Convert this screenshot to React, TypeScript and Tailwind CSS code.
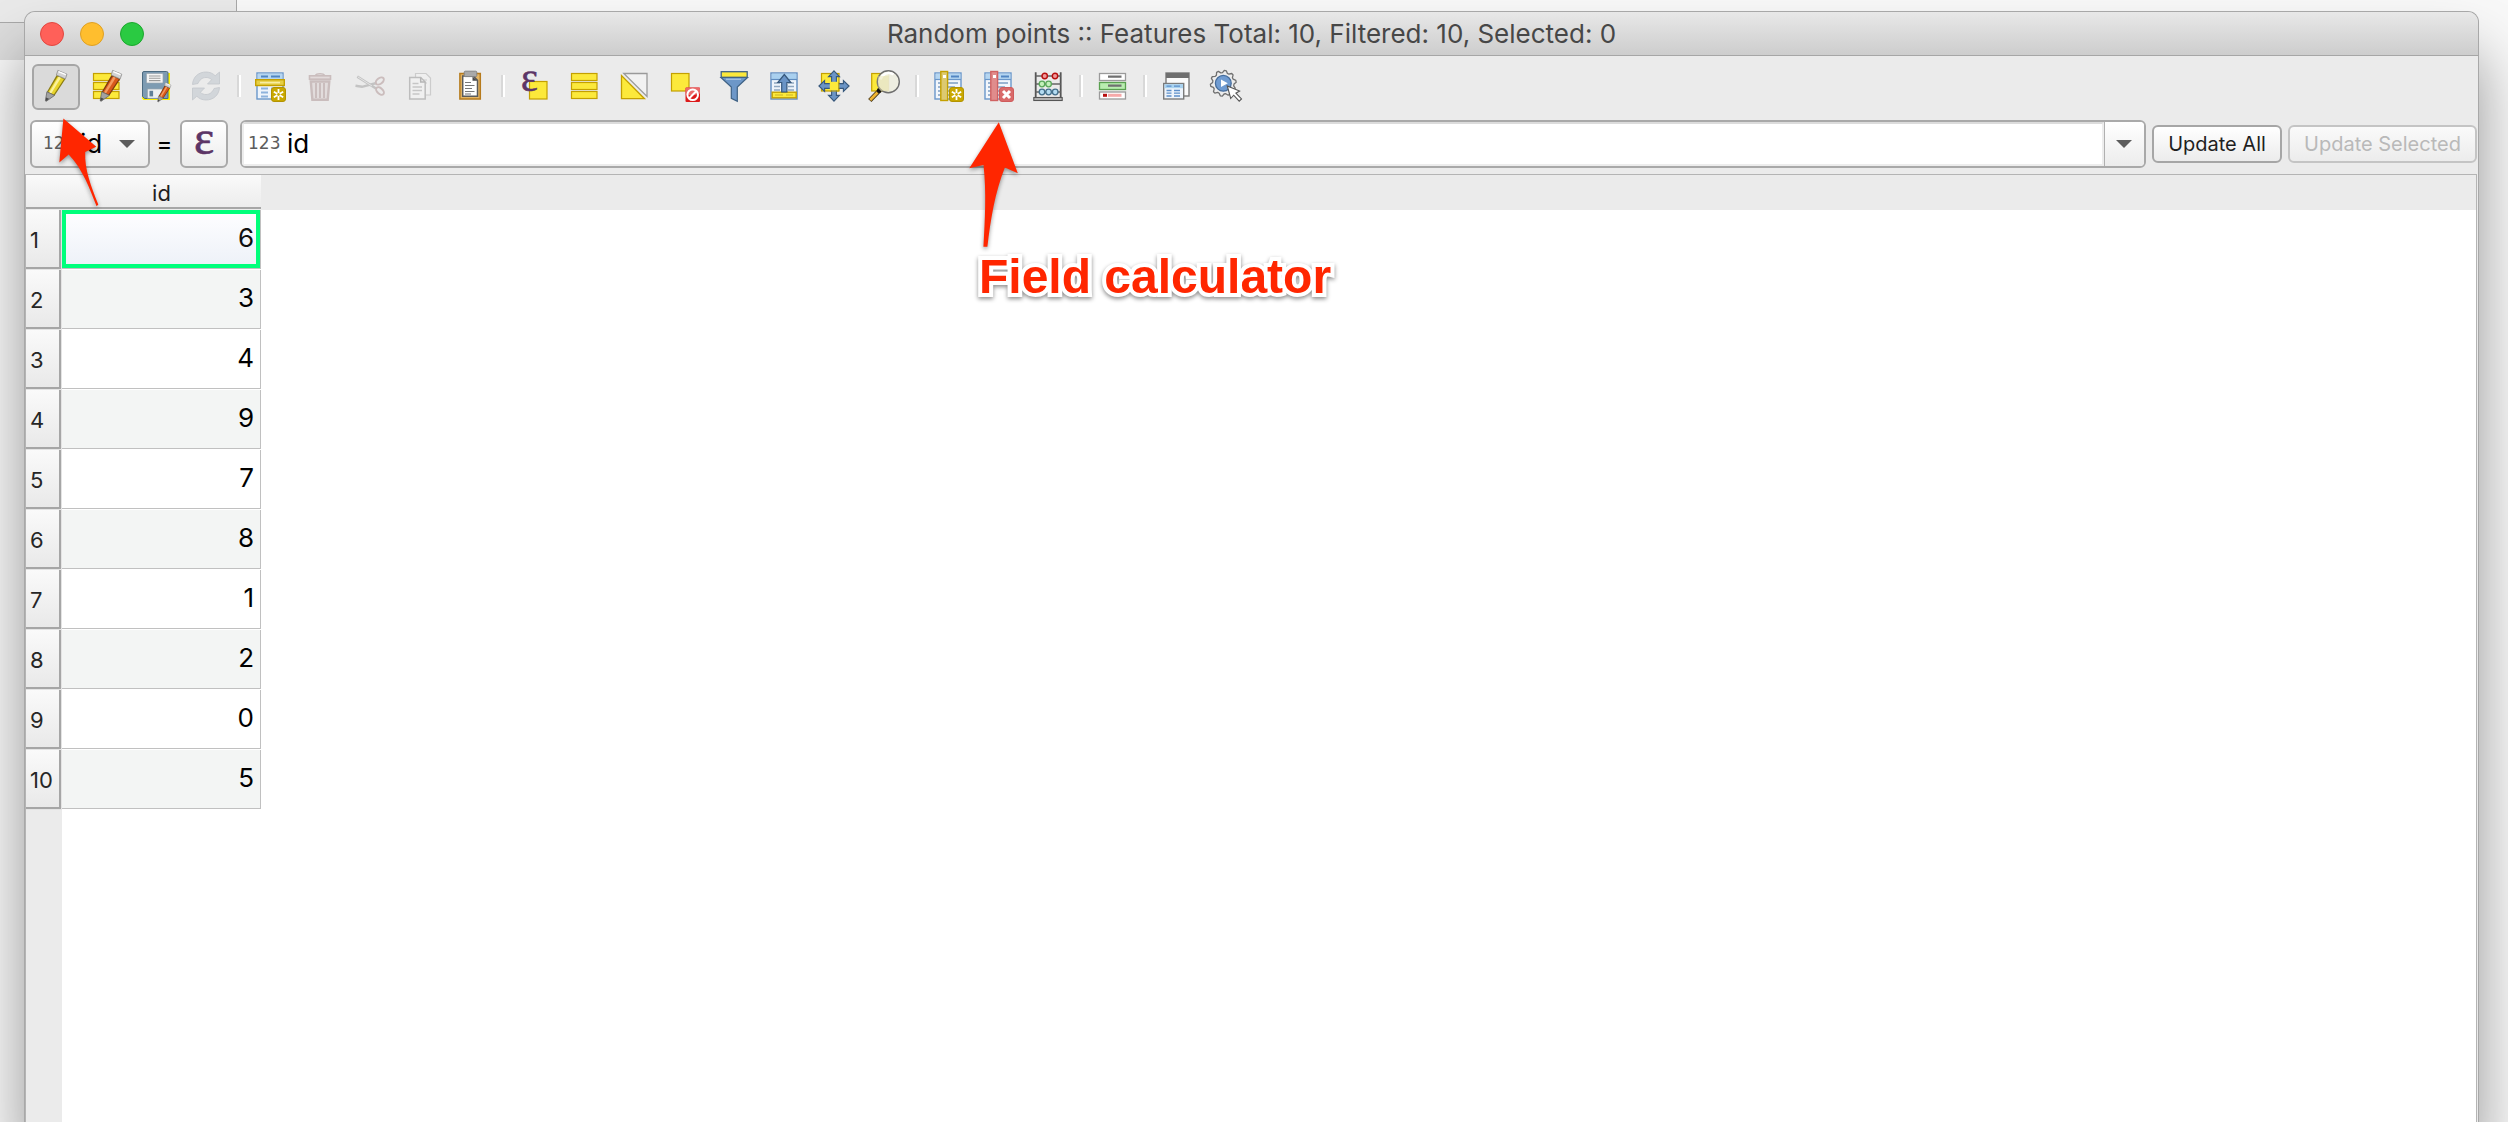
import React from 'react';
import type { ReactNode } from 'react';

const YF = '#fce93b';
const YS = '#c4a000';

function Svg({ children }: { children: ReactNode }) {
  return (
    <svg viewBox="0 0 32 32" className="h-8 w-8 shrink-0 overflow-visible" fill="none" aria-hidden="true">
      {children}
    </svg>
  );
}

function Pencil({ dark, mid, light, transform }: { dark: string; mid: string; light: string; transform?: string }) {
  return (
    <g transform={transform}>
      <path d="M16.7 5 25.6 8.8 14.6 25.4 6.9 22z" fill={dark} />
      <path d="M17.6 6.4 24 9.1 13.8 24.4 8.2 22z" fill={mid} />
      <path d="M18.6 6.8 21 7.8 11.4 23.2 9.2 22.4z" fill={light} />
      <path d="M17.8.4 27 4.2 25.4 8.9 16.4 5z" fill="#d3d3d3" stroke="#8f8f8f" strokeWidth=".8" />
      <path d="M18.5 1.6 25.8 4.7" stroke="#fff" strokeWidth="1.4" />
      <path d="M6.9 21.8 14.6 25.4 6.4 31.2 5.4 30.6z" fill="#a2a2a2" stroke="#666" strokeWidth=".8" />
      <path d="M6 27.4 9 28.8 5.6 31.6z" fill="#4a4a4a" />
    </g>
  );
}

const orange = { dark: '#7c3a12', mid: '#d9591b', light: '#f49a5e' };

function Bars() {
  return (
    <g fill={YF} stroke={YS} strokeWidth="1.2">
      <rect x="3.5" y="3.5" width="25.5" height="7" />
      <rect x="3.5" y="12.5" width="25.5" height="7" />
      <rect x="3.5" y="21.5" width="25.5" height="7" />
    </g>
  );
}

function Star() {
  return (
    <g>
      <rect x="17.5" y="17.5" width="14" height="14" rx="2.5" fill="#c9a800" stroke="#b39300" />
      <path d="M24.5 19v11M19.8 21.8l9.4 5.4M29.2 21.8l-9.4 5.4" stroke="#fff" strokeWidth="1.8" />
      <circle cx="24.5" cy="24.5" r="1.4" fill="#c9a800" />
    </g>
  );
}

function Sheet() {
  return (
    <g>
      <rect x="3" y="3" width="26" height="26" fill="#f2f6fb" stroke="#6a97cb" strokeWidth="1.4" />
      <rect x="3.7" y="3.7" width="24.6" height="5.6" fill="#b5d6f1" />
      <path d="M3 9.5h26" stroke="#6a97cb" strokeWidth="1.2" />
      <path d="M6 13h6M14 13h12M6 17h6M14 17h9M6 21h6M14 21h12M6 25h6M14 25h9" stroke="#7d9fc4" strokeWidth="1.5" />
      <path d="M19 6.5h8" stroke="#5286c2" strokeWidth="2" />
    </g>
  );
}

function Epsilon({ x, y, size }: { x: number; y: number; size: number }) {
  return (
    <text x={x} y={y} fontSize={size} fontFamily="Liberation Serif, serif" fill="#5c3566" stroke="#5c3566" strokeWidth=".6" textAnchor="middle">
      ε
    </text>
  );
}

const fourWayArrow =
  'M16 .9 21.5 6.6H18.4V13.6H25.4V10.5L31.1 16 25.4 21.5V18.4H18.4V25.4H21.5L16 31.1 10.5 25.4H13.6V18.4H6.6V21.5L.9 16 6.6 10.5V13.6H13.6V6.6H10.5z';

const gearPoints = Array.from({ length: 40 }, (_, i) => {
  const radius = i % 4 < 2 ? 12.9 : 10.7;
  const angle = ((i + 0.5) * Math.PI) / 20 - Math.PI / 2;
  return `${(13.3 + radius * Math.cos(angle)).toFixed(1)},${(13.3 + radius * Math.sin(angle)).toFixed(1)}`;
}).join(' ');

const icons: Record<string, ReactNode> = {
  'Toggle editing mode': <Pencil dark="#8a7b12" mid="#e8d42c" light="#fbf29a" />,
  'Toggle multi edit mode': (
    <>
      <Bars />
      <Pencil {...orange} transform="translate(4.8 0)" />
    </>
  ),
  'Save edits': (
    <>
      <path d="M4 3h26v27H3.5L2 28.5z" fill="#fcf000" />
      <path d="M2.5 3q0-1.5 1.5-1.5h22.5q1.5 0 1.5 1.5V28.500H4.500l-2-2z" fill="#7d9bb2" stroke="#4c6a80" />
      <rect x="6.5" y="3.5" width="16.5" height="9.5" rx=".8" fill="#f4f4f4" stroke="#9aa5ad" strokeWidth=".7" />
      <path d="M9 6h11.5M9 8.300h11.500M9 10.600h11.500" stroke="#9a9a9a" strokeWidth="1.1" />
      <rect x="7.5" y="19" width="15" height="9.2" fill="#eceff1" stroke="#9aa5ad" strokeWidth=".7" />
      <rect x="9.5" y="20.8" width="3.6" height="5.6" fill="#5f7f98" />
      <Pencil {...orange} transform="translate(14.3 12.5) scale(.62)" />
    </>
  ),
  Reload: (
    <g fill="#d2d6da" stroke="#c3c7cb" strokeWidth=".8">
      <path d="M2.5 14.5C3 6.5 9 2 16 2c4 0 7 1.5 9.2 3.8L29.5 2v12H17.5l4.2-4.4C20 8.2 18.3 7.5 16 7.5c-4 0-6.5 2.5-8 6z" />
      <path d="M29.5 17.5C29 25.5 23 30 16 30c-4 0-7-1.5-9.2-3.8L2.5 30V18h12l-4.2 4.4c1.7 1.4 3.4 2.1 5.7 2.1 4 0 6.5-2.5 8-6z" />
    </g>
  ),
  'Add feature': (
    <>
      <rect x="3" y="3" width="26" height="26" fill="#eef4fb" stroke="#6a97cb" strokeWidth="1.4" />
      <rect x="3.7" y="3.7" width="24.6" height="5.6" fill="#b5d6f1" />
      <path d="M7 6.5h7M17 6.5h9" stroke="#5286c2" strokeWidth="2.2" />
      <path d="M7 18.5h7M17 18.5h9M7 22.5h7M17 22.5h6M7 26.5h7" stroke="#8db2dc" strokeWidth="2" />
      <rect x="1.7" y="9.7" width="28.6" height="5.8" fill="#e6cf45" stroke={YS} strokeWidth="1.4" />
      <path d="M6 12.6h20" stroke="#f7eda4" strokeWidth="1.6" />
      <Star />
    </>
  ),
  'Delete selected features': (
    <g stroke="#cabdbd" strokeWidth="1.6">
      <path d="M11.5 5.500c1-2.400 8-2.400 9 0" />
      <rect x="5.5" y="5.8" width="21" height="3.4" fill="#e2dada" />
      <path d="M6.8 11.5h18.5l-1.6 18.3H8.4z" fill="#e2dcdc" strokeWidth="2.4" />
      <path d="M12 13v15M16 13v15M20 13v15" strokeWidth="2" />
    </g>
  ),
  'Cut selected rows': (
    <g stroke="#c3c3c3">
      <path d="M3.3 6.7 22 18.5" strokeWidth="2.6" />
      <path d="M1.5 15.8 8 16.8 22.5 13" strokeWidth="2.4" />
      <path d="M4 7 18 16" stroke="#e4e4e4" />
      <ellipse cx="25.8" cy="11" rx="4.6" ry="2.8" transform="rotate(-38 25.8 11)" strokeWidth="2" stroke="#cbbdbd" />
      <ellipse cx="26" cy="21" rx="4.6" ry="2.8" transform="rotate(42 26 21)" strokeWidth="2" stroke="#cbbdbd" />
    </g>
  ),
  'Copy selected rows': (
    <g stroke="#ccc" strokeWidth="1.2">
      <path d="M11.5 3.5h10.5l4.5 4.5v17h-15z" fill="#efefef" />
      <path d="M14 10h9M14 13h9" />
      <path d="M5.7 7.5h11l4.500 4.500v17H5.700z" fill="#f0f0f0" stroke="#bdbdbd" strokeWidth="1.5" />
      <path d="M16.7 7.5v4.500h4.500" stroke="#b5b5b5" strokeWidth="1.5" />
      <path d="M8.5 13.5h6M8.500 17h9.500M8.500 20.500h9.500M8.500 24h7" stroke="#c6c6c6" strokeWidth="1.3" />
    </g>
  ),
  'Paste features': (
    <>
      <rect x="5.9" y="3.5" width="20.4" height="25.5" fill="#e3b566" stroke="#b67a1c" strokeWidth="1.5" />
      <path d="M8.7 6h10.5l4.3 4.3v16H8.700z" fill="#fff" stroke="#5a5a5a" strokeWidth="1.5" />
      <path d="M18.5 6.5v4.300h5z" fill="#4a4a4a" />
      <path d="M11 12.5h6M11 15.500h9.500M11 18.500h7M11 21.500h9.500M11 24h6" stroke="#777" strokeWidth="1.2" />
      <rect x="10.2" y="1.2" width="12.6" height="5.4" rx="1" fill="#a9a9a9" stroke="#858585" />
    </>
  ),
  'Select features using an expression': (
    <>
      <rect x="11.5" y="11.5" width="17.5" height="17.5" fill={YF} stroke={YS} strokeWidth="1.2" />
      <Epsilon x={11.5} y={20.8} size={40} />
    </>
  ),
  'Select all': <Bars />,
  'Invert selection': (
    <>
      <path d="M5.8 3.5H29v23z" fill="#f2f2f2" stroke="#9a9a9a" strokeWidth="1.3" />
      <path d="M3.5 5.5V28.700H26.500z" fill={YF} stroke={YS} strokeWidth="1.3" />
    </>
  ),
  'Deselect all': (
    <>
      <rect x="3.5" y="3.5" width="17.5" height="17.5" fill={YF} stroke={YS} strokeWidth="1.2" />
      <rect x="17.5" y="17.5" width="14.5" height="14.5" rx="1" fill="#dc1a1a" />
      <path d="M17.5 18.5q0-1 1-1h12.500q1 0 1 1v5q-7 3-14.500 1z" fill="#ea6a6a" />
      <circle cx="24.7" cy="24.7" r="5.3" stroke="#fff" strokeWidth="2" />
      <path d="M21.2 28.2l7-7" stroke="#fff" strokeWidth="2" />
    </>
  ),
  'Filter or select features using form': (
    <>
      <path d="M3 7.5h26.5L19.300 17v14.300l-6-3V17z" fill="#6d97c8" stroke="#3f6285" strokeWidth="1.2" />
      <rect x="3.2" y="1.7" width="26" height="5.6" fill={YF} stroke="#3f6285" strokeWidth="1.3" />
      <path d="M8 9.3h15" stroke="#a9c5e4" strokeWidth="1.2" />
    </>
  ),
  'Move selection to top': (
    <>
      <rect x="3" y="3" width="26" height="26" fill="#eef4fb" stroke="#5f8cc0" strokeWidth="1.4" />
      <rect x="3.7" y="3.7" width="24.6" height="5.6" fill="#a9d0ef" />
      <path d="M3 9.5h26" stroke="#5f8cc0" strokeWidth="1.2" />
      <path d="M6 13h6M20 13h6M6 16.5h6M20 16.5h6M6 20h6M20 20h6" stroke="#8ea6c0" strokeWidth="1.3" />
      <rect x="4.2" y="22.2" width="24" height="5.6" fill={YF} stroke={YS} strokeWidth="1.4" />
      <path d="M7 25h8M18 25h7" stroke="#c9b32a" strokeWidth="1.2" />
      <path d="M16.3 4.5 22.8 12.5h-3.900v9.500h-5.200v-9.500H9.800z" fill="#6a94c6" stroke="#37587c" strokeWidth="1.2" />
    </>
  ),
  'Pan map to the selected rows': (
    <>
      <rect x="3.5" y="3.5" width="17.5" height="17.5" fill={YF} stroke={YS} strokeWidth="1.2" />
      <path d={fourWayArrow} fill="#6a94c6" stroke="#37587c" strokeWidth="1.1" />
      <rect x="11.8" y="11.8" width="8.6" height="8.6" fill={YF} />
      <path d="M20.8 12v9h-9" stroke={YS} />
    </>
  ),
  'Zoom map to the selected rows': (
    <>
      <rect x="3.7" y="3.5" width="17" height="17.5" fill={YF} stroke={YS} strokeWidth="1.2" />
      <path d="M11.5 20.5 1.8 30.5" stroke="#4a3a1a" strokeWidth="4.6" />
      <path d="M9.5 22.5 2.2 30" stroke="#f2b632" strokeWidth="2.6" />
      <circle cx="11.3" cy="20.5" r="2.4" fill="#111" />
      <circle cx="20.3" cy="11.7" r="11" fill="#eeeee0" fillOpacity=".92" stroke="#6f6f6f" strokeWidth="1.4" />
      <path d="M12.5 9.5a8.5 8.5 0 0 1 13-5" stroke="#fff" strokeWidth="2.6" />
      <path d="M20.7 6v15h-8a11 11 0 0 1-3-6V6z" fill="#e6dfa8" fillOpacity=".45" />
    </>
  ),
  'New field': (
    <>
      <Sheet />
      <rect x="8.8" y="1.5" width="6.8" height="29" fill="#dcc970" stroke={YS} strokeWidth="1.4" />
      <rect x="11" y="5" width="3" height="3" fill="#fff" />
      <Star />
    </>
  ),
  'Delete field': (
    <>
      <Sheet />
      <rect x="8.8" y="1.5" width="6.8" height="29" fill="#e08c8c" stroke="#d06262" strokeWidth="1.4" />
      <rect x="11" y="5" width="3" height="3" fill="#fff" />
      <rect x="17.5" y="17.5" width="14" height="14" rx="2.5" fill="#d96a6a" stroke="#cf5b5b" />
      <path d="M21 21l7 7M28 21l-7 7" stroke="#fff" strokeWidth="3" />
    </>
  ),
  'Open field calculator': (
    <>
      <path d="M3.7 2.3V27.5M28.7 2.3V27.5" stroke="#555" strokeWidth="1.8" />
      <path d="M3.7 6h25M3.7 14h25M3.7 22h25" stroke="#666" strokeWidth="1.3" />
      <rect x="1.8" y="27.5" width="28.4" height="3" fill="#b5b5b5" stroke="#555" strokeWidth="1.1" />
      <g fill="#ef9a9a" stroke="#b80f0f" strokeWidth="1.4">
        <circle cx="12.7" cy="6" r="2.7" />
        <circle cx="23" cy="6" r="2.7" />
      </g>
      <g fill="#c3f0bb" stroke="#5aa85a" strokeWidth="1.3">
        <circle cx="10" cy="14" r="2.8" />
        <circle cx="16.6" cy="14" r="2.8" />
      </g>
      <g fill="#b4dcf2" stroke="#44708c" strokeWidth="1.3">
        <circle cx="10" cy="22" r="2.8" />
        <circle cx="16.6" cy="22" r="2.8" />
        <circle cx="23.2" cy="22" r="2.8" />
      </g>
    </>
  ),
  'Conditional formatting': (
    <>
      <rect x="3.5" y="3.5" width="26" height="7" fill="#fff" stroke="#9a9a9a" strokeWidth="1.3" />
      <rect x="3.5" y="12.5" width="26" height="7" fill="#b9edb0" stroke="#5aa050" strokeWidth="1.3" />
      <rect x="3.5" y="22" width="26" height="7" fill="#fff" stroke="#9a9a9a" strokeWidth="1.3" />
      <path d="M12 6.7h13.5M12 15.7h13.5" stroke="#707070" strokeWidth="2.2" />
      <path d="M7 25.3h4" stroke="#b80f0f" strokeWidth="3" />
      <path d="M12 25.3h13.5" stroke="#f6a9a9" strokeWidth="3" />
    </>
  ),
  'Dock attribute table': (
    <>
      <rect x="6" y="3" width="23" height="23" fill="#fbfbfb" stroke="#7b7b7b" strokeWidth="1.4" />
      <rect x="6" y="3" width="23" height="5" fill="#6f6f6f" />
      <rect x="3.7" y="13.5" width="20" height="15.5" fill="#eef4fb" stroke="#7b7b7b" strokeWidth="1.4" />
      <rect x="4.5" y="14.2" width="18.5" height="4" fill="#a9d3f0" />
      <path d="M6.5 16.2h5M14 16.2h6M6.5 20.5h5M14 20.5h6M6.5 23.2h5M14 23.2h6M6.5 26h5M14 26h6" stroke="#5d8fc9" strokeWidth="1.3" />
    </>
  ),
  Actions: (
    <>
      <polygon points={gearPoints} fill="#ededed" stroke="#6f6f6f" strokeWidth="1.3" strokeLinejoin="round" />
      <circle cx="13.3" cy="13.3" r="7.9" fill="#6f9bd1" stroke="#466d9c" strokeWidth="1.3" />
      <path d="M11 9.5v7.6l6.8-3.8z" fill="#fff" />
      <path d="M17.3 16l3.4 12.5 3-3.3 5.5 6 2.3-2.300-5.600-5.700 3.700-2.200z" fill="#fff" stroke="#555" strokeWidth="1.1" />
    </>
  ),
};

const groups: string[][] = [
  ['Toggle editing mode', 'Toggle multi edit mode', 'Save edits', 'Reload'],
  ['Add feature', 'Delete selected features', 'Cut selected rows', 'Copy selected rows', 'Paste features'],
  [
    'Select features using an expression',
    'Select all',
    'Invert selection',
    'Deselect all',
    'Filter or select features using form',
    'Move selection to top',
    'Pan map to the selected rows',
    'Zoom map to the selected rows',
  ],
  ['New field', 'Delete field', 'Open field calculator'],
  ['Conditional formatting'],
  ['Dock attribute table', 'Actions'],
];

const values = [6, 3, 4, 9, 7, 8, 1, 2, 0, 5];

function Toolbar() {
  return (
    <div role="toolbar" aria-label="Attribute table" className="flex gap-[2px] pt-2 pl-[7px]">
      {groups.map((group, g) => (
        <React.Fragment key={g}>
          {g > 0 && <div className="mt-[11px] mr-[3px] ml-[5px] h-[22px] w-1 border-r-2 border-white bg-[#d8d8d8]" />}
          {group.map((name) => (
            <button
              key={name}
              type="button"
              title={name}
              aria-label={name}
              className={
                name === 'Toggle editing mode'
                  ? 'flex h-[46px] w-12 items-start justify-center rounded-md border-2 border-[#a6a6a6] bg-[#dadada] pt-1'
                  : 'flex h-[46px] w-12 items-start justify-center rounded-md border-2 border-transparent pt-1'
              }
            >
              <Svg>{icons[name]}</Svg>
            </button>
          ))}
        </React.Fragment>
      ))}
    </div>
  );
}

function Caret({ className }: { className: string }) {
  return (
    <svg viewBox="0 0 16 8" className={className} aria-hidden="true">
      <path d="M0 0h16L8 8z" fill="#5c5c5c" />
    </svg>
  );
}

function FieldBar() {
  return (
    <div className="mt-[10px] flex items-center pr-px pl-[5px]">
      <div className="relative h-12 w-[120px] rounded-md border-2 border-[#a9a9a9] bg-linear-to-b from-white to-[#ececec]">
        <span className="pointer-events-none absolute top-[11px] left-[11px] font-['DejaVu_Sans',sans-serif] text-[17px] leading-5 text-[#5c5c5c]">123</span>
        <select aria-label="Field" className="h-full w-full appearance-none bg-transparent pb-[2px] pl-12 text-[26px] text-black">
          <option>id</option>
        </select>
        <Caret className="pointer-events-none absolute top-[18px] right-[13px] h-2 w-4" />
      </div>
      <span className="w-[30px] pr-px text-center text-[24px] text-black">=</span>
      <button
        type="button"
        aria-label="Expression dialog"
        className="flex h-12 w-12 items-center justify-center rounded-md border-2 border-[#a9a9a9] bg-linear-to-b from-white to-[#ececec]"
      >
        <Svg>
          <Epsilon x={16} y={26} size={48} />
        </Svg>
      </button>
      <div className="relative ml-3 flex h-12 flex-1 overflow-hidden rounded-md border-2 border-[#a9a9a9] bg-white">
        <span className="pointer-events-none absolute top-[11px] left-[6px] font-['DejaVu_Sans',sans-serif] text-[17px] leading-5 text-[#5c5c5c]">123</span>
        <input
          aria-label="Expression"
          defaultValue="id"
          className="min-w-0 flex-1 border-2 border-[#ededed] border-t-[#dcdcdc] pb-[2px] pl-[43px] text-[26px] text-black outline-none"
        />
        <button
          type="button"
          aria-label="Recent expressions"
          className="flex w-10 items-center justify-center border-l border-[#b0b0b0] bg-linear-to-b from-white to-[#ececec] pr-[2px]"
        >
          <Caret className="h-2 w-4" />
        </button>
      </div>
      <button
        type="button"
        className="ml-[6px] h-[38px] w-[130px] rounded-md border-2 border-[#a6a6a6] bg-linear-to-b from-white to-[#ececec] text-[20px] text-[#1f1f1f]"
      >
        Update All
      </button>
      <button
        type="button"
        disabled
        className="ml-[6px] h-[38px] w-[189px] rounded-md border-2 border-[#c4c4c4] bg-linear-to-b from-[#fafafa] to-[#ececec] text-[20px] text-[#b9b9b9]"
      >
        Update Selected
      </button>
    </div>
  );
}

function AttributeTable() {
  return (
    <div className="mt-[6px] mr-px flex flex-1 flex-col border-t border-r border-l border-[#b4b4b4] bg-white">
      <table className="w-full table-fixed border-collapse">
        <colgroup>
          <col className="w-9" />
          <col className="w-[199px]" />
          <col />
        </colgroup>
        <thead>
          <tr className="h-[35px] bg-[#ebebeb]">
            <td className="p-0 align-top">
              <div className="h-[34px] border-b-2 border-[#a6a6a6] bg-linear-to-b from-[#fafafa] to-[#ececec]" />
            </td>
            <th scope="col" className="p-0 align-top font-normal">
              <div className="h-[34px] border-b-2 border-[#a6a6a6] bg-linear-to-b from-[#fafafa] to-[#ececec] text-[22px] leading-9 text-[#1f1f1f]">id</div>
            </th>
            <td />
          </tr>
        </thead>
        <tbody>
          {values.map((value, i) => (
            <tr key={value} className="h-[60px]">
              <th scope="row" className="bg-[#e4e4e4] p-0 pr-px align-top font-normal">
                <div className="h-[59px] border-r-2 border-b-2 border-[#a6a6a6] bg-linear-to-b from-[#fafafa] to-[#e9e9e9] pl-1 text-left text-[22px] leading-[60px] text-[#262626]">
                  {i + 1}
                </div>
              </th>
              <td className="p-0 align-top">
                {i === 0 ? (
                  <div className="h-[59px] border-r border-b border-[#c0c0c0]">
                    <div className="h-[58px] border-4 border-[#00ff7b] bg-linear-to-b from-[#fdfdff] to-[#eef2f8] pr-[2px] text-right text-[26px] leading-[48px] text-[#111]">
                      {value}
                    </div>
                  </div>
                ) : (
                  <div
                    className={
                      i % 2
                        ? 'h-[59px] border-r border-b border-[#c0c0c0] bg-[#f3f5f4] pr-[6px] text-right text-[26px] leading-[56px] text-black'
                        : 'h-[59px] border-r border-b border-[#c0c0c0] pr-[6px] text-right text-[26px] leading-[56px] text-black'
                    }
                  >
                    {value}
                  </div>
                )}
              </td>
            </tr>
          ))}
        </tbody>
      </table>
      <div className="w-9 flex-1 bg-[#ebebeb]" />
    </div>
  );
}

export default function App() {
  return (
    <div className="relative flex min-h-screen flex-col overflow-hidden bg-[#f8f8f8] font-['Inter',sans-serif]">
      <div className="absolute top-0 left-0 h-[23px] w-[237px] border-r border-b border-[#a8a8a8] bg-[#e9e9e9]" />
      <div className="absolute top-[23px] left-0 h-[37px] w-10 bg-[#dcdcdc]" />
      <main className="relative mt-[11px] mr-[29px] ml-6 flex flex-1 flex-col rounded-t-[11px] border border-b-0 border-[#a8a8a8] bg-[#ebebeb] shadow-[0_44px_60px_rgba(0,0,0,0.4)]">
        <header className="relative flex h-11 items-center gap-4 rounded-t-[10px] border-b border-[#a6a6a6] bg-linear-to-b from-[#e8e8e8] to-[#cdcdcd] pl-[15px]">
          <button type="button" aria-label="Close" className="h-6 w-6 rounded-full border border-[#e2463f] bg-[#ff6059]" />
          <button type="button" aria-label="Minimize" className="h-6 w-6 rounded-full border border-[#dfa023] bg-[#ffbe2e]" />
          <button type="button" aria-label="Zoom" className="h-6 w-6 rounded-full border border-[#1ba82d] bg-[#2aca42]" />
          <h1 className="pointer-events-none absolute inset-x-0 text-center text-[26px] leading-8 text-[#474747]">
            Random points :: Features Total: 10, Filtered: 10, Selected: 0
          </h1>
        </header>
        <Toolbar />
        <FieldBar />
        <AttributeTable />
      </main>
      <svg
        viewBox="0 0 42 90"
        className="pointer-events-none absolute top-[118px] left-[58px] h-[90px] w-[42px] overflow-visible drop-shadow-[0_2px_2px_rgba(0,0,0,0.4)]"
        aria-hidden="true"
      >
        <path d="M5.4.5 38.3 28.8 27.2 34C26.5 52 33 68 40.3 86.5L38.6 88.2C32 72 25.5 52 10.7 36.5L1.3 44.6z" fill="#ff2600" />
      </svg>
      <svg
        viewBox="0 0 50 126"
        className="pointer-events-none absolute top-[122px] left-[969px] h-[126px] w-[50px] overflow-visible drop-shadow-[0_2px_2px_rgba(0,0,0,0.4)]"
        aria-hidden="true"
      >
        <path d="M29.8.3 48.8 51.3 35.9 45.5C26 70 21.5 98 18.4 124.8L14.4 124.8C16 98 17.5 70 14.5 43L.3 46.3z" fill="#ff2600" />
      </svg>
      <p className="pointer-events-none absolute top-[253px] left-[979px] font-['Liberation_Sans',sans-serif] text-[48px] leading-[48px] font-bold whitespace-nowrap text-[#ff2600] drop-shadow-[0_2px_2px_rgba(0,0,0,0.45)] [-webkit-text-stroke:8px_white] [paint-order:stroke_fill]">
        Field calculator
      </p>
    </div>
  );
}
